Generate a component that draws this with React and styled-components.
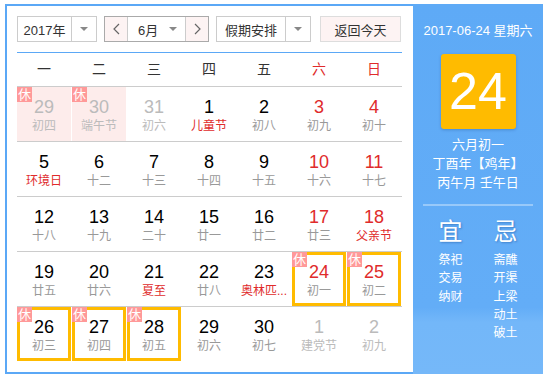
import styled, { createGlobalStyle } from "styled-components";

const GlobalStyle = createGlobalStyle`
  body {
    margin: 0;
    background: #fff;
    font-family: "Liberation Sans", "Noto Sans CJK SC", sans-serif;
  }
`;

const WEEKDAYS = ["一", "二", "三", "四", "五", "六", "日"];

// out = other month, wk = weekend, fest = red festival text
const WEEKS = [
  [
    { d: 29, l: "初四", out: true, rest: true, pink: true },
    { d: 30, l: "端午节", out: true, rest: true, pink: true },
    { d: 31, l: "初六", out: true },
    { d: 1, l: "儿童节", fest: true },
    { d: 2, l: "初八" },
    { d: 3, l: "初九", wk: true },
    { d: 4, l: "初十", wk: true },
  ],
  [
    { d: 5, l: "环境日", fest: true },
    { d: 6, l: "十二" },
    { d: 7, l: "十三" },
    { d: 8, l: "十四" },
    { d: 9, l: "十五" },
    { d: 10, l: "十六", wk: true },
    { d: 11, l: "十七", wk: true },
  ],
  [
    { d: 12, l: "十八" },
    { d: 13, l: "十九" },
    { d: 14, l: "二十" },
    { d: 15, l: "廿一" },
    { d: 16, l: "廿二" },
    { d: 17, l: "廿三", wk: true },
    { d: 18, l: "父亲节", wk: true, fest: true },
  ],
  [
    { d: 19, l: "廿五" },
    { d: 20, l: "廿六" },
    { d: 21, l: "夏至", fest: true },
    { d: 22, l: "廿八" },
    { d: 23, l: "奥林匹...", fest: true },
    { d: 24, l: "初一", wk: true, rest: true, active: true },
    { d: 25, l: "初二", wk: true, rest: true, active: true },
  ],
  [
    { d: 26, l: "初三", rest: true, active: true },
    { d: 27, l: "初四", rest: true, active: true },
    { d: 28, l: "初五", rest: true, active: true },
    { d: 29, l: "初六" },
    { d: 30, l: "初七" },
    { d: 1, l: "建党节", out: true },
    { d: 2, l: "初九", out: true },
  ],
];

const YI = ["祭祀", "交易", "纳财"];
const JI = ["斋醮", "开渠", "上梁", "动土", "破土"];

const Chevron = ({ dir }) => (
  <svg width="7" height="12" viewBox="0 0 7 12">
    <polyline
      points={dir === "left" ? "6,1 1,6 6,11" : "1,1 6,6 1,11"}
      fill="none"
      stroke="#666"
      strokeWidth="1.2"
    />
  </svg>
);

const App = () => {
  return (
    <>
      <GlobalStyle />
      <Frame>
        <Main>
          <Toolbar>
            <Select $width={80}>
              <SelectText>2017年</SelectText>
              <ArrowBox>
                <Caret />
              </ArrowBox>
            </Select>
            <MonthGroup>
              <StepButton $side="left">
                <Chevron dir="left" />
              </StepButton>
              <MonthText>
                <span>6月</span>
                <Caret />
              </MonthText>
              <StepButton $side="right">
                <Chevron dir="right" />
              </StepButton>
            </MonthGroup>
            <Select $width={95}>
              <SelectText>假期安排</SelectText>
              <ArrowBox>
                <Caret />
              </ArrowBox>
            </Select>
            <TodayButton>返回今天</TodayButton>
          </Toolbar>

          <HeaderRow>
            {WEEKDAYS.map((w, i) => (
              <HeaderCell key={w} $red={i >= 5}>
                {w}
              </HeaderCell>
            ))}
          </HeaderRow>

          {WEEKS.map((week, wi) => (
            <WeekRow key={wi}>
              {week.map((c, ci) => (
                <DayCell key={ci} $pink={c.pink} $active={c.active}>
                  {c.rest && <RestBadge>休</RestBadge>}
                  <DayNum $out={c.out} $red={c.wk}>
                    {c.d}
                  </DayNum>
                  <Lunar $out={c.out} $red={c.fest && !c.out}>
                    {c.l}
                  </Lunar>
                </DayCell>
              ))}
            </WeekRow>
          ))}
        </Main>

        <Side>
          <DateLine>2017-06-24 星期六</DateLine>
          <BigDay>24</BigDay>
          <LunarInfo>
            <div>六月初一</div>
            <div>丁酉年【鸡年】</div>
            <div>丙午月 壬午日</div>
          </LunarInfo>
          <Divider />
          <YiJi>
            <YiJiCol>
              <YiJiTitle>宜</YiJiTitle>
              {YI.map((t) => (
                <YiJiItem key={t}>{t}</YiJiItem>
              ))}
            </YiJiCol>
            <YiJiCol>
              <YiJiTitle>忌</YiJiTitle>
              {JI.map((t) => (
                <YiJiItem key={t}>{t}</YiJiItem>
              ))}
            </YiJiCol>
          </YiJi>
        </Side>
      </Frame>
    </>
  );
};

// Styled Components
const Frame = styled.div`
  display: flex;
  width: 538px;
  height: 370px;
  margin: 4px 0 0 5px;
`;

const Main = styled.div`
  box-sizing: border-box;
  width: 408px;
  height: 370px;
  border: 2px solid #5ba8f6;
  border-right: none;
  padding: 10px 11px 0 10px;
`;

const Toolbar = styled.div`
  display: flex;
  gap: 7px;
  height: 26px;
  margin-bottom: 10px;
  font-size: 13px;
  color: #333;
`;

const Select = styled.div`
  box-sizing: border-box;
  display: flex;
  width: ${(p) => p.$width}px;
  height: 26px;
  border: 1px solid #ccc;
`;

const SelectText = styled.div`
  flex: 1;
  display: flex;
  align-items: center;
  justify-content: center;
`;

const ArrowBox = styled.div`
  width: 24px;
  display: flex;
  align-items: center;
  justify-content: center;
  border-left: 1px solid #ccc;
`;

const Caret = styled.span`
  width: 0;
  height: 0;
  border-left: 4px solid transparent;
  border-right: 4px solid transparent;
  border-top: 4px solid #888;
`;

const MonthGroup = styled.div`
  box-sizing: border-box;
  display: flex;
  width: 105px;
  height: 26px;
  border: 1px solid #aaa;
`;

const StepButton = styled.div`
  width: 22px;
  display: flex;
  align-items: center;
  justify-content: center;
  background: #fdf3f3;
  border-${(p) => (p.$side === "left" ? "right" : "left")}: 1px solid #ccc;
`;

const MonthText = styled.div`
  flex: 1;
  display: flex;
  align-items: center;
  justify-content: space-between;
  padding: 0 8px 0 10px;
`;

const TodayButton = styled.div`
  box-sizing: border-box;
  width: 81px;
  height: 26px;
  margin-left: 2px;
  display: flex;
  align-items: center;
  justify-content: center;
  border: 1px solid #ddd;
  background: #fdf3f3;
`;

const HeaderRow = styled.div`
  display: grid;
  grid-template-columns: repeat(7, 54px);
  column-gap: 1px;
  border-top: 1px solid #5ba8f6;
  height: 33px;
`;

const HeaderCell = styled.div`
  text-align: center;
  line-height: 33px;
  font-size: 14px;
  color: ${(p) => (p.$red ? "#e02b2b" : "#333")};
`;

const WeekRow = styled.div`
  display: grid;
  grid-template-columns: repeat(7, 54px);
  column-gap: 1px;
  border-top: 1px solid #ccc;
  height: 54px;
`;

const DayCell = styled.div`
  position: relative;
  box-sizing: border-box;
  height: 54px;
  padding: 10px 2px 0;
  text-align: center;
  background: ${(p) => (p.$pink ? "#fdeceb" : "#fff")};
  box-shadow: ${(p) => (p.$active ? "inset 0 0 0 3px #ffbb00" : "none")};
`;

const RestBadge = styled.span`
  position: absolute;
  top: 0;
  left: 0;
  width: 15px;
  height: 15px;
  line-height: 15px;
  font-size: 13px;
  text-align: center;
  color: #fff;
  background: #f99;
`;

const DayNum = styled.div`
  font-size: 18px;
  line-height: 20px;
  color: ${(p) => (p.$out ? "#bbb" : p.$red ? "#e02b2b" : "#000")};
`;

const Lunar = styled.div`
  font-size: 12px;
  line-height: 18px;
  white-space: nowrap;
  color: ${(p) => (p.$out ? "#bbb" : p.$red ? "#e02b2b" : "#999")};
`;

const Side = styled.div`
  width: 130px;
  height: 370px;
  background: linear-gradient(#5eaaf6 0%, #63adf7 82%, #73b7f9 86%, #75b8f9 100%);
  color: #fff;
  text-align: center;
  padding-top: 18px;
  box-sizing: border-box;
`;

const DateLine = styled.div`
  font-size: 13px;
  line-height: 18px;
`;

const BigDay = styled.div`
  width: 75px;
  height: 75px;
  margin: 14px auto 0;
  background: #ffbb00;
  border-radius: 3px;
  box-shadow: 0 1px 3px rgba(0, 40, 100, 0.25);
  font-size: 52px;
  line-height: 75px;
`;

const LunarInfo = styled.div`
  margin-top: 6px;
  font-size: 13px;
  line-height: 19px;
`;

const Divider = styled.div`
  height: 2px;
  margin: 12px 10px 0;
  background: rgba(255, 255, 255, 0.35);
`;

const YiJi = styled.div`
  display: grid;
  grid-template-columns: 55px 55px;
  justify-content: center;
  margin-top: 11px;
`;

const YiJiCol = styled.div`
  display: flex;
  flex-direction: column;
  align-items: center;
`;

const YiJiTitle = styled.div`
  font-size: 24px;
  line-height: 30px;
  margin-bottom: 4px;
  text-shadow: 1px 1px 2px rgba(0, 50, 120, 0.35);
`;

const YiJiItem = styled.div`
  font-size: 12px;
  line-height: 18.3px;
`;

export default App;
